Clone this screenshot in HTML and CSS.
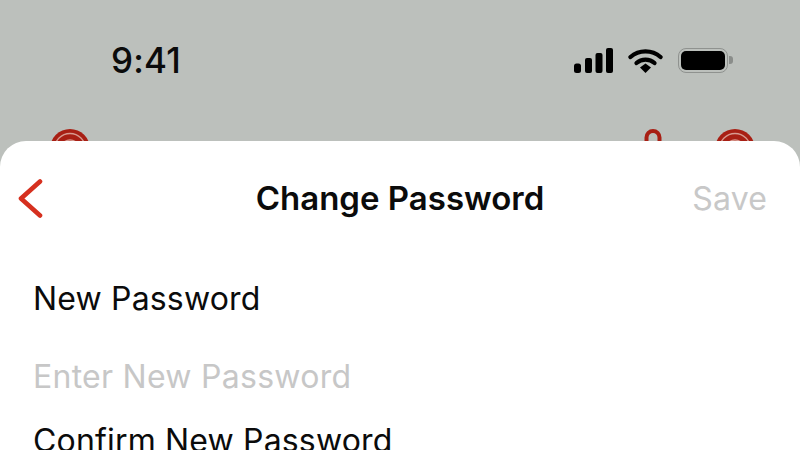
FILE: index.html
```html
<!DOCTYPE html>
<html lang="en">
<head>
<meta charset="utf-8">
<title>Change Password</title>
<link rel="stylesheet" href="styles.css">
</head>
<body>
<div class="screen">
  <div class="status">
    <span class="time">9:41</span>
    <div class="status-icons">
      <svg class="signal" width="39" height="25" viewBox="0 0 39 25"><rect x="0" y="15.500" width="7" height="9.500" rx="2.500"/><rect x="11" y="10" width="7" height="15" rx="2"/><rect x="21.500" y="5" width="7" height="20" rx="2"/><rect x="32" y="0" width="7" height="25" rx="2"/></svg>
      <svg class="wifi" width="35" height="25" viewBox="0 0 35 25"><path d="M2.500 9C11 1.500 24 1.500 32.500 9" fill="none" stroke="#000" stroke-width="4.300" stroke-linecap="round"/><path d="M8.500 15C13.500 10.500 21.500 10.500 26.500 15" fill="none" stroke="#000" stroke-width="4.300" stroke-linecap="round"/><path d="M12 19.500L17.500 15.500 23 19.500 17.500 25Z"/></svg>
      <div class="battery"><div class="battery-body"><div class="battery-fill"></div></div><div class="battery-cap"></div></div>
    </div>
  </div>
  <div class="behind">
    <svg class="target" width="40" height="40" viewBox="0 0 40 40"><circle cx="20" cy="20" r="20" fill="#a81f14"/><circle cx="20" cy="20" r="15.500" fill="none" stroke="#d79a90" stroke-width="1.300"/><circle cx="20" cy="20.500" r="9.500" fill="none" stroke="#d79a90" stroke-width="1.300"/></svg>
    <div class="behind-right">
      <svg class="hook" width="18" height="40" viewBox="0 0 18 40"><path d="M2.500 20V8.500a6.500 6.500 0 0 1 13 0V20" fill="none" stroke="#a81f14" stroke-width="4"/></svg>
      <svg class="target" width="40" height="40" viewBox="0 0 40 40"><circle cx="20" cy="20" r="20" fill="#a81f14"/><circle cx="20" cy="20" r="15.500" fill="none" stroke="#d79a90" stroke-width="1.300"/><circle cx="20" cy="20.500" r="9.500" fill="none" stroke="#d79a90" stroke-width="1.300"/></svg>
    </div>
  </div>
  <main class="sheet">
    <header class="nav">
      <div class="nav-side">
        <svg class="back" width="26" height="40" viewBox="0 0 26 40"><path d="M22 3.500L3 20.500 22 37.500" fill="none" stroke="#d6301f" stroke-width="4.600" stroke-linecap="round" stroke-linejoin="round"/></svg>
      </div>
      <h1 class="title">Change Password</h1>
      <div class="nav-side nav-side-end"><span class="save">Save</span></div>
    </header>
    <label class="label">New Password</label>
    <div class="placeholder">Enter New Password</div>
    <label class="label label-confirm">Confirm New Password</label>
  </main>
</div>
</body>
</html>
```
FILE: styles.css
```css
html, body {
  margin: 0;
  padding: 0;
}
body {
  width: 800px;
  height: 450px;
  overflow: hidden;
  font-family: Inter, "Liberation Sans", sans-serif;
  background: #bcc0bc;
  color: #0b0b0b;
}
.screen {
  display: flex;
  flex-direction: column;
  height: 450px;
  overflow: hidden;
}
.status {
  display: flex;
  justify-content: space-between;
  align-items: center;
  height: 60px;
  margin-top: 30px;
  padding: 0 67px 0 111px;
  flex: none;
}
.time {
  font-size: 35px;
  font-weight: 500;
  letter-spacing: 0.200px;
}
.status-icons {
  display: flex;
  align-items: center;
  gap: 15px;
}
.signal {
  display: block;
  fill: #000;
}
.wifi {
  display: block;
}
.battery {
  display: flex;
  align-items: center;
  gap: 1px;
}
.battery-body {
  width: 44px;
  height: 19px;
  border: 1px solid #8f928f;
  border-radius: 8px;
  padding: 2px;
}
.battery-fill {
  height: 100%;
  background: #000;
  border-radius: 5px;
}
.battery-cap {
  width: 4px;
  height: 8px;
  background: #8a8d8a;
  border-radius: 0 3px 3px 0;
}
.behind {
  display: flex;
  justify-content: space-between;
  align-items: flex-start;
  height: 51px;
  padding: 39px 45px 0 50px;
  box-sizing: border-box;
  overflow: hidden;
  flex: none;
}
.behind-right {
  display: flex;
  gap: 53px;
}
.sheet {
  flex: 1;
  background: #fff;
  border-radius: 26px 26px 0 0;
  padding: 0 33px;
}
.nav {
  display: grid;
  grid-template-columns: 1fr auto 1fr;
  align-items: center;
  height: 114px;
}
.nav-side {
  margin-left: -15px;
}
.nav-side-end {
  margin-left: 0;
  text-align: right;
}
.back {
  display: block;
}
.title {
  margin: 0;
  font-size: 33px;
  font-weight: 600;
}
.save {
  font-size: 32px;
  letter-spacing: 0.150px;
  color: #c8c8c8;
}
.label {
  display: block;
  font-size: 32px;
  line-height: 40px;
  letter-spacing: 0.170px;
  margin-top: 24px;
}
.placeholder {
  font-size: 32px;
  line-height: 40px;
  letter-spacing: 0.270px;
  margin-top: 38px;
  color: #c7c7c7;
}
.label-confirm {
  margin-top: 24px;
}
```
